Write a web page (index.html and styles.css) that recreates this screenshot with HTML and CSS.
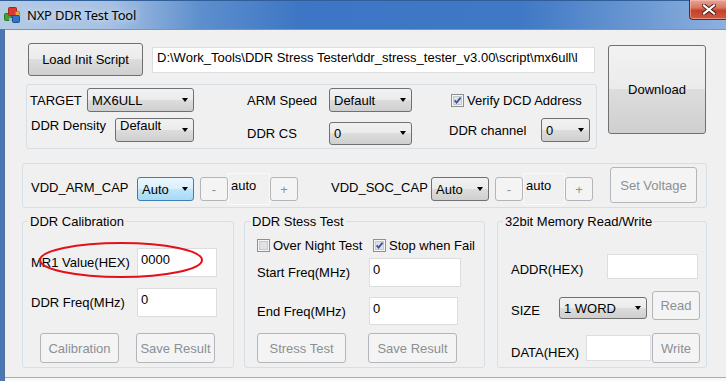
FILE: index.html
```html
<!DOCTYPE html>
<html lang="en">
<head>
    <meta charset="UTF-8">
    <meta name="viewport" content="width=device-width, initial-scale=1.0">
    <title>NXP DDR Test Tool</title>
    <link rel="stylesheet" href="styles.css">
</head>
<body>
    <div class="window">
        <div class="titlebar">
            <svg class="app-icon" width="17" height="17" viewBox="0 0 17 17">
                <rect x="0.5" y="6.5" width="7" height="7" rx="1" fill="#3da23b" stroke="#2a7a2a"/>
                <rect x="4.5" y="0.5" width="8" height="8" rx="1" fill="#db3a2e" stroke="#a82419"/>
                <rect x="11.5" y="4.5" width="4" height="4" rx="1" fill="#eaa53c" stroke="#b97b1f"/>
                <rect x="8.5" y="8.5" width="7" height="7" rx="1" fill="#2f73c6" stroke="#1f4f8f"/>
                <rect x="5" y="11" width="3" height="3" fill="#9fb3c8"/>
            </svg>
            <span class="title">NXP DDR Test Tool</span>
            <div class="close-btn">
                <svg width="14" height="11" viewBox="0 0 14 11">
                    <path d="M2 1.5 L12 9.5 M12 1.5 L2 9.5" stroke="#4a1810" stroke-width="4" stroke-linecap="square"/>
                    <path d="M2 1.5 L12 9.5 M12 1.5 L2 9.5" stroke="#ffffff" stroke-width="2.2" stroke-linecap="square"/>
                </svg>
            </div>
        </div>

        <div class="frame">
            <div class="client">
                <div class="top-section">
                    <div class="top-left">
                        <div class="script-row">
                            <div class="btn btn-load">Load Init Script</div>
                            <div class="textbox path-box">D:\Work_Tools\DDR Stress Tester\ddr_stress_tester_v3.00\script\mx6ull\l</div>
                        </div>

                        <div class="group group-target">
                            <div class="target-row r1">
                                <span class="lbl lbl-target">TARGET</span>
                                <div class="combo w107"><span>MX6ULL</span><i class="arrow"></i></div>
                                <span class="lbl lbl-arm">ARM Speed</span>
                                <div class="combo w83"><span>Default</span><i class="arrow"></i></div>
                                <label class="check check-verify">
                                    <svg width="13" height="13" viewBox="0 0 13 13">
                                        <rect x="0.5" y="0.5" width="12" height="12" fill="#f6f6f6" stroke="#8e8f8f"/>
                                        <rect x="2.5" y="2.5" width="8" height="8" fill="#dfe1e4" stroke="#c5c8cc"/>
                                        <path d="M3.6 6.3 L5.6 8.6 L9.6 3.6" stroke="#3d539a" stroke-width="1.8" fill="none"/>
                                    </svg>
                                    <span>Verify DCD Address</span>
                                </label>
                            </div>
                            <div class="target-row r2">
                                <span class="lbl lbl-density">DDR Density</span>
                                <div class="combo w79 combo-high"><span>Default</span><i class="arrow"></i></div>
                                <span class="lbl lbl-cs">DDR CS</span>
                                <div class="combo w83 combo-cs"><span>0</span><i class="arrow"></i></div>
                                <span class="lbl lbl-channel">DDR channel</span>
                                <div class="combo w49"><span>0</span><i class="arrow"></i></div>
                            </div>
                        </div>
                    </div>

                    <div class="btn btn-download">Download</div>
                </div>

                <div class="group group-voltage">
                    <div class="volt-row">
                        <span class="lbl lbl-arm-cap">VDD_ARM_CAP</span>
                        <div class="combo combo-focus w57"><span>Auto</span><i class="arrow"></i></div>
                        <div class="btn disabled spin">-</div>
                        <div class="auto-box">auto</div>
                        <div class="btn disabled spin spin-plus">+</div>
                        <span class="lbl lbl-soc-cap">VDD_SOC_CAP</span>
                        <div class="combo w58"><span>Auto</span><i class="arrow"></i></div>
                        <div class="btn disabled spin">-</div>
                        <div class="auto-box">auto</div>
                        <div class="btn disabled spin spin-plus">+</div>
                        <div class="btn disabled btn-set">Set Voltage</div>
                    </div>
                </div>

                <div class="bottom-groups">
                    <div class="group group-cal">
                        <div class="legend">DDR Calibration</div>
                        <div class="form-row cal-row1">
                            <span class="lbl w106">MR1 Value(HEX)</span>
                            <div class="textbox tall w80">0000</div>
                        </div>
                        <div class="form-row cal-row2">
                            <span class="lbl w106">DDR Freq(MHz)</span>
                            <div class="textbox tall w80">0</div>
                        </div>
                        <div class="form-row cal-buttons">
                            <div class="btn disabled w79">Calibration</div>
                            <div class="btn disabled w79 gap17">Save Result</div>
                        </div>
                    </div>

                    <div class="group group-stress">
                        <div class="legend">DDR Stess Test</div>
                        <div class="form-row check-row">
                            <label class="check check-night">
                                <svg width="13" height="13" viewBox="0 0 13 13">
                                    <rect x="0.5" y="0.5" width="12" height="12" fill="#f6f6f6" stroke="#8e8f8f"/>
                                    <rect x="2.5" y="2.5" width="8" height="8" fill="#dfe1e4" stroke="#c5c8cc"/>
                                </svg>
                                <span>Over Night Test</span>
                            </label>
                            <label class="check">
                                <svg width="13" height="13" viewBox="0 0 13 13">
                                    <rect x="0.5" y="0.5" width="12" height="12" fill="#f6f6f6" stroke="#8e8f8f"/>
                                    <rect x="2.5" y="2.5" width="8" height="8" fill="#dfe1e4" stroke="#c5c8cc"/>
                                    <path d="M3.6 6.3 L5.6 8.6 L9.6 3.6" stroke="#3d539a" stroke-width="1.8" fill="none"/>
                                </svg>
                                <span>Stop when Fail</span>
                            </label>
                        </div>
                        <div class="form-row stress-start">
                            <span class="lbl w112">Start Freq(MHz)</span>
                            <div class="textbox tall w92">0</div>
                        </div>
                        <div class="form-row stress-end">
                            <span class="lbl w112">End Freq(MHz)</span>
                            <div class="textbox tall w89">0</div>
                        </div>
                        <div class="form-row stress-buttons">
                            <div class="btn disabled w89">Stress Test</div>
                            <div class="btn disabled w89 gap22">Save Result</div>
                        </div>
                    </div>

                    <div class="group group-mem">
                        <div class="legend">32bit Memory Read/Write</div>
                        <div class="form-row mem-addr">
                            <span class="lbl w96 nudge-addr">ADDR(HEX)</span>
                            <div class="textbox w91"></div>
                        </div>
                        <div class="form-row mem-size">
                            <span class="lbl w48 nudge-9">SIZE</span>
                            <div class="combo w88 combo-size"><span>1 WORD</span><i class="arrow"></i></div>
                            <div class="btn disabled btn-small btn-read">Read</div>
                        </div>
                        <div class="form-row mem-data">
                            <span class="lbl w75 nudge-9">DATA(HEX)</span>
                            <div class="textbox w65 data-box"></div>
                            <div class="btn disabled btn-small btn-write">Write</div>
                        </div>
                    </div>
                </div>

                <div class="statusbar"></div>
            </div>
        </div>

        <svg class="annotation" width="168" height="40" viewBox="0 0 168 40">
            <ellipse cx="83" cy="19" rx="81" ry="17" fill="none" stroke="#e3101a" stroke-width="2"/>
        </svg>
    </div>
</body>
</html>
```

FILE: styles.css
```css
* {
    box-sizing: border-box;
}
body {
    margin: 0;
    background-color: #f0f0f0;
    font-family: 'Liberation Sans', Arial, sans-serif;
    font-size: 13px;
    color: #000;
}
.window {
    position: relative;
    width: 726px;
    height: 381px;
    overflow: hidden;
    background-color: #4a78b3;
}

/* title bar */
.titlebar {
    display: flex;
    align-items: center;
    height: 29px;
    padding-left: 4px;
    background: linear-gradient(to right, #b4cbe6 0px, #a6c1e3 110px, #5e8fcd 200px, #3d76c4 300px, #3f78c5 520px, #6b98d2 640px, #8eb1de 726px);
    border-top: 1px solid #2f5e98;
}
.app-icon {
    flex: none;
    margin-top: 1px;
}
.title {
    margin-left: 6px;
    font-family: 'Noto Sans', sans-serif;
    font-size: 13px;
    letter-spacing: -0.2px;
    color: #000;
    text-shadow: 0 0 6px rgba(255, 255, 255, 0.9);
}
.close-btn {
    display: flex;
    align-items: center;
    justify-content: center;
    align-self: flex-start;
    margin-left: auto;
    margin-right: -10px;
    margin-top: -1px;
    width: 47px;
    height: 20px;
    border: 1px solid #6e2418;
    border-top: none;
    border-radius: 0 0 4px 4px;
    background: linear-gradient(#e7a497 0%, #d9785f 40%, #c5412b 55%, #cf5a40 100%);
    box-shadow: inset 0 0 0 1px rgba(255, 200, 190, 0.5);
    padding-right: 8px;
}

/* window body */
.frame {
    display: flex;
    height: 352px;
    padding-left: 4px;
}
.client {
    flex: 1;
    display: flex;
    flex-direction: column;
    background-color: #f0f0f0;
    border-top: 1px solid #7f93ad;
    border-left: 1px solid #52729c;
}

.top-section {
    display: flex;
    margin: 13px 0 0 21px;
}
.top-left {
    width: 571px;
}
.script-row {
    display: flex;
    height: 33px;
}

/* generic controls */
.lbl {
    flex: none;
    line-height: 15px;
    white-space: nowrap;
}
.btn {
    flex: none;
    display: flex;
    align-items: center;
    justify-content: center;
    border: 1px solid #707070;
    border-radius: 3px;
    background: linear-gradient(#f2f2f2 0%, #ebebeb 50%, #dddddd 50%, #cfcfcf 100%);
    white-space: nowrap;
}
.btn.disabled {
    border-color: #b2b6ba;
    background: #f4f4f4;
    color: #8a9096;
}
.textbox {
    flex: none;
    background-color: #fff;
    border: 1px solid #dcdde0;
    padding: 3px 0 0 3px;
    line-height: 15px;
    white-space: nowrap;
    overflow: hidden;
}
.combo {
    flex: none;
    display: flex;
    align-items: center;
    height: 24px;
    padding: 0 5px 0 4px;
    border: 1px solid #707070;
    border-radius: 3px;
    background: linear-gradient(#f2f2f2 0%, #ebebeb 50%, #dddddd 50%, #cfcfcf 100%);
}
.combo span {
    flex: 1;
    white-space: nowrap;
}
.combo .arrow {
    width: 0;
    height: 0;
    border-left: 3.5px solid transparent;
    border-right: 3.5px solid transparent;
    border-top: 4px solid #000;
}
.combo-focus {
    border-color: #3c7fb1;
    background: linear-gradient(#eaf6fd 0%, #d9f0fc 50%, #bee6fd 50%, #a7d9f5 100%);
}
.check {
    display: flex;
    align-items: center;
    gap: 3px;
    white-space: nowrap;
}
.check svg {
    flex: none;
}

.group {
    flex: none;
    border: 1px solid #d5dfe5;
    border-radius: 3px;
}
.legend {
    width: fit-content;
    margin: -8px 0 0 5px;
    padding: 0 2px;
    line-height: 15px;
    background-color: #f0f0f0;
}

/* top area */
.btn-load {
    width: 115px;
    height: 33px;
    margin-left: 2px;
}
.path-box {
    width: 443px;
    height: 26px;
    margin: 4px 0 0 9px;
    padding: 2px 0 0 4px;
}
.btn-download {
    width: 98px;
    height: 89px;
    margin: 2px 0 0 11px;
}

.group-target {
    height: 65px;
    margin-top: 8px;
}
.target-row {
    display: flex;
    align-items: center;
    height: 24px;
}
.target-row.r1 {
    margin-top: 3px;
    padding-left: 3px;
}
.target-row.r2 {
    margin-top: 6px;
    padding-left: 4px;
}
.lbl-target { width: 57px; }
.lbl-arm { width: 82px; margin-left: 53px; }
.check-verify { margin-left: 39px; }
.lbl-density { width: 84px; margin-bottom: 9px; }
.lbl-cs { width: 82px; margin-left: 53px; margin-top: 7px; }
.lbl-channel { width: 92px; margin-left: 37px; }
.combo-high span { margin-top: -9px; }
.combo-cs { height: 23px; margin-top: 6px; }

.w48 { width: 48px; }
.w49 { width: 49px; }
.w57 { width: 57px; }
.w58 { width: 58px; }
.w65 { width: 65px; }
.w75 { width: 75px; }
.w79 { width: 79px; }
.w80 { width: 80px; }
.w83 { width: 83px; }
.w88 { width: 88px; }
.w89 { width: 89px; }
.w91 { width: 91px; }
.w92 { width: 92px; }
.w96 { width: 96px; }
.w106 { width: 106px; }
.w107 { width: 107px; }
.w112 { width: 112px; }

/* voltage group */
.group-voltage {
    width: 685px;
    height: 45px;
    margin: 14px 0 0 17px;
}
.volt-row {
    display: flex;
    align-items: center;
    height: 24px;
    margin-top: 13px;
    padding-left: 8px;
}
.lbl-arm-cap { width: 106px; margin-bottom: 3px; }
.lbl-soc-cap { width: 100px; margin-left: 33px; margin-bottom: 3px; }
.spin {
    width: 28px;
    height: 24px;
    margin-left: 6px;
    color: #a3a7ab;
}
.spin-plus {
    margin-left: 0;
}
.auto-box {
    flex: none;
    width: 42px;
    height: 32px;
    padding: 4px 0 0 2px;
    line-height: 15px;
    border: 1px solid #f9f9f9;
    background-color: #f0f0f0;
}
.btn-set {
    width: 87px;
    height: 36px;
    margin: 0 0 8px 17px;
}

/* bottom groups */
.bottom-groups {
    display: flex;
    margin: 13px 0 0 17px;
}
.group-cal {
    width: 212px;
    height: 147px;
}
.group-stress {
    width: 241px;
    height: 147px;
    margin-left: 10px;
}
.group-mem {
    width: 210px;
    height: 147px;
    margin-left: 12px;
}
.form-row {
    display: flex;
    align-items: center;
}
.tall {
    height: 29px;
}
.cal-row1 {
    height: 29px;
    margin-top: 19px;
    padding-left: 8px;
}
.cal-row2 {
    height: 29px;
    margin-top: 11px;
    padding-left: 8px;
}
.cal-buttons {
    height: 30px;
    margin-top: 16px;
    padding-left: 17px;
}
.cal-buttons .btn,
.stress-buttons .btn {
    height: 30px;
}
.gap17 { margin-left: 17px; }
.gap22 { margin-left: 22px; }

.check-row {
    height: 13px;
    margin-top: 10px;
    padding-left: 12px;
}
.check-night {
    width: 116px;
}
.stress-start {
    height: 29px;
    margin-top: 6px;
    padding-left: 12px;
}
.stress-end {
    height: 28px;
    margin-top: 10px;
    padding-left: 12px;
}
.stress-end .textbox {
    height: 28px;
}
.stress-buttons {
    height: 30px;
    margin-top: 8px;
    padding-left: 12px;
}

.mem-addr {
    height: 25px;
    margin-top: 25px;
    padding-left: 13px;
}
.mem-addr .textbox {
    height: 25px;
}
.nudge-addr { margin-top: 5px; }
.nudge-9 { margin-top: 9px; }
.mem-size {
    height: 29px;
    margin-top: 12px;
    padding-left: 13px;
}
.combo-size {
    height: 22px;
    margin-top: 5px;
}
.btn-small {
    width: 48px;
}
.btn-read {
    height: 29px;
    margin-left: 5px;
}
.mem-data {
    height: 30px;
    margin-top: 13px;
    padding-left: 13px;
}
.data-box {
    height: 26px;
}
.btn-write {
    height: 30px;
    margin-left: 1px;
}

.statusbar {
    margin-top: auto;
    height: 4px;
    border-top: 1px solid #a9acb0;
    background-color: #f8f8f8;
}

/* red marker drawn over the MR1 row */
.annotation {
    position: absolute;
    left: 38px;
    top: 241px;
}
```
